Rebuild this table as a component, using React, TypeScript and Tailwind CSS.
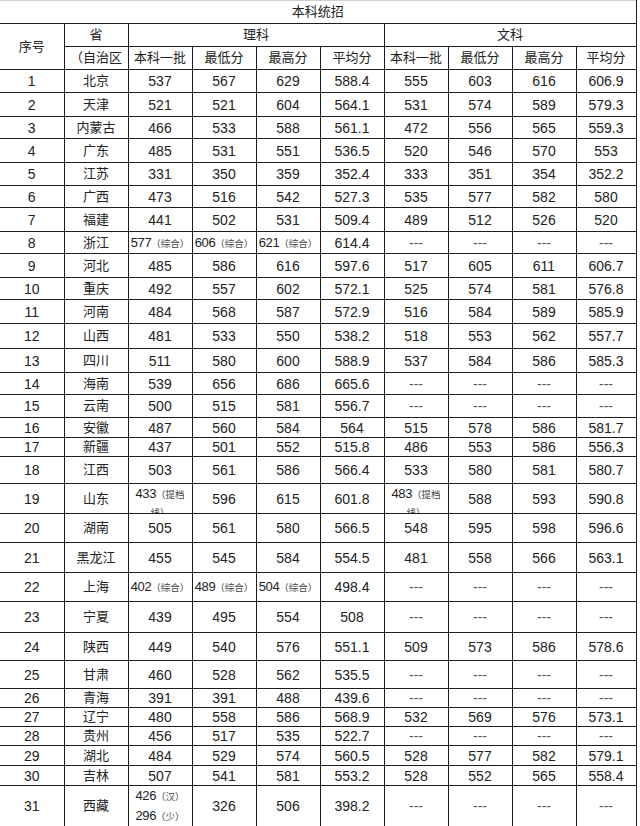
import React from 'react';

type Row = {
    no: string;
    prov: string;
    h: string;
    cells: React.ReactNode[];
};

const Note = ({ children }: { children: React.ReactNode }) => (
    <span className="text-[9.5px] text-[#444]">{children}</span>
);

// number squeezed a bit so the note fits the cell, as in the sheet
const Num = ({ children }: { children: React.ReactNode }) => (
    <span className="text-[13px] tracking-[-0.4px]">{children}</span>
);

const zh = (n: string) => (
    <>
        <Num>{n}</Num>
        <Note>（综合）</Note>
    </>
);

const tidang = (n: string) => (
    <div className="h-[29px] overflow-hidden pt-[1px] leading-[17px]">
        <Num>{n}</Num>
        <Note>（提档</Note>
        <br />
        <Note>线）</Note>
    </div>
);

const D = '---';
const none = [D, D, D, D];

const rows: Row[] = [
    { no: '1', prov: '北京', h: 'h-[23px]', cells: ['537', '567', '629', '588.4', '555', '603', '616', '606.9'] },
    { no: '2', prov: '天津', h: 'h-[24px]', cells: ['521', '521', '604', '564.1', '531', '574', '589', '579.3'] },
    { no: '3', prov: '内蒙古', h: 'h-[22px]', cells: ['466', '533', '588', '561.1', '472', '556', '565', '559.3'] },
    { no: '4', prov: '广东', h: 'h-[24px]', cells: ['485', '531', '551', '536.5', '520', '546', '570', '553'] },
    { no: '5', prov: '江苏', h: 'h-[23px]', cells: ['331', '350', '359', '352.4', '333', '351', '354', '352.2'] },
    { no: '6', prov: '广西', h: 'h-[22px]', cells: ['473', '516', '542', '527.3', '535', '577', '582', '580'] },
    { no: '7', prov: '福建', h: 'h-[24px]', cells: ['441', '502', '531', '509.4', '489', '512', '526', '520'] },
    { no: '8', prov: '浙江', h: 'h-[22px]', cells: [zh('577'), zh('606'), zh('621'), '614.4', ...none] },
    { no: '9', prov: '河北', h: 'h-[24px]', cells: ['485', '586', '616', '597.6', '517', '605', '611', '606.7'] },
    { no: '10', prov: '重庆', h: 'h-[22px]', cells: ['492', '557', '602', '572.1', '525', '574', '581', '576.8'] },
    { no: '11', prov: '河南', h: 'h-[24px]', cells: ['484', '568', '587', '572.9', '516', '584', '589', '585.9'] },
    { no: '12', prov: '山西', h: 'h-[25px]', cells: ['481', '533', '550', '538.2', '518', '553', '562', '557.7'] },
    { no: '13', prov: '四川', h: 'h-[24px]', cells: ['511', '580', '600', '588.9', '537', '584', '586', '585.3'] },
    { no: '14', prov: '海南', h: 'h-[22px]', cells: ['539', '656', '686', '665.6', ...none] },
    { no: '15', prov: '云南', h: 'h-[23px]', cells: ['500', '515', '581', '556.7', ...none] },
    { no: '16', prov: '安徽', h: 'h-[20px]', cells: ['487', '560', '584', '564', '515', '578', '586', '581.7'] },
    { no: '17', prov: '新疆', h: 'h-[19px]', cells: ['437', '501', '552', '515.8', '486', '553', '586', '556.3'] },
    { no: '18', prov: '江西', h: 'h-[27px]', cells: ['503', '561', '586', '566.4', '533', '580', '581', '580.7'] },
    { no: '19', prov: '山东', h: 'h-[30px]', cells: [tidang('433'), '596', '615', '601.8', tidang('483'), '588', '593', '590.8'] },
    { no: '20', prov: '湖南', h: 'h-[29px]', cells: ['505', '561', '580', '566.5', '548', '595', '598', '596.6'] },
    { no: '21', prov: '黑龙江', h: 'h-[30px]', cells: ['455', '545', '584', '554.5', '481', '558', '566', '563.1'] },
    { no: '22', prov: '上海', h: 'h-[29px]', cells: [zh('402'), zh('489'), zh('504'), '498.4', ...none] },
    { no: '23', prov: '宁夏', h: 'h-[31px]', cells: ['439', '495', '554', '508', ...none] },
    { no: '24', prov: '陕西', h: 'h-[28px]', cells: ['449', '540', '576', '551.1', '509', '573', '586', '578.6'] },
    { no: '25', prov: '甘肃', h: 'h-[28px]', cells: ['460', '528', '562', '535.5', ...none] },
    { no: '26', prov: '青海', h: 'h-[19px]', cells: ['391', '391', '488', '439.6', ...none] },
    { no: '27', prov: '辽宁', h: 'h-[19px]', cells: ['480', '558', '586', '568.9', '532', '569', '576', '573.1'] },
    { no: '28', prov: '贵州', h: 'h-[19px]', cells: ['456', '517', '535', '522.7', ...none] },
    { no: '29', prov: '湖北', h: 'h-[20px]', cells: ['484', '529', '574', '560.5', '528', '577', '582', '579.1'] },
    { no: '30', prov: '吉林', h: 'h-[20px]', cells: ['507', '541', '581', '553.2', '528', '552', '565', '558.4'] },
    {
        no: '31',
        prov: '西藏',
        h: 'h-[40px]',
        cells: [
            <div className="leading-[19px]">
                <Num>426</Num>
                <Note>（汉）</Note>
                <br />
                <Num>296</Num>
                <Note>（少）</Note>
            </div>,
            '326',
            '506',
            '398.2',
            ...none,
        ],
    },
];

const td = 'border border-[#1c1c1c] p-0 text-center align-middle whitespace-nowrap leading-[16px]';
const first = 'border-l-0';
const cjk = 'text-[13px]';

const App = () => {
    return (
        <div className="w-[640px] h-[826px] bg-white overflow-hidden font-['Liberation_Sans','Noto_Sans_CJK_SC',sans-serif] text-[14px] text-[#222]">
            <table className="w-[636px] table-fixed border-collapse">
                <colgroup>
                    <col className="w-[64px]" />
                    <col className="w-[64px]" />
                    <col className="w-[64px]" />
                    <col className="w-[64px]" />
                    <col className="w-[64px]" />
                    <col className="w-[64px]" />
                    <col className="w-[64px]" />
                    <col className="w-[64px]" />
                    <col className="w-[64px]" />
                    <col className="w-[60px]" />
                </colgroup>
                <tbody>
                    <tr className="h-[23px]">
                        <td colSpan={10} className={`${td} ${first} border-t-[#cfcfcf] ${cjk}`}>
                            本科统招
                        </td>
                    </tr>
                    <tr className="h-[23px]">
                        <td rowSpan={2} className={`${td} ${first} ${cjk}`}>序号</td>
                        <td className={`${td} ${cjk}`}>省</td>
                        <td colSpan={4} className={`${td} ${cjk}`}>理科</td>
                        <td colSpan={4} className={`${td} ${cjk}`}>文科</td>
                    </tr>
                    <tr className="h-[23px]">
                        <td className={`${td} ${cjk}`}>（自治区</td>
                        <td className={`${td} ${cjk}`}>本科一批</td>
                        <td className={`${td} ${cjk}`}>最低分</td>
                        <td className={`${td} ${cjk}`}>最高分</td>
                        <td className={`${td} ${cjk}`}>平均分</td>
                        <td className={`${td} ${cjk}`}>本科一批</td>
                        <td className={`${td} ${cjk}`}>最低分</td>
                        <td className={`${td} ${cjk}`}>最高分</td>
                        <td className={`${td} ${cjk}`}>平均分</td>
                    </tr>
                    {rows.map((r) => (
                        <tr key={r.no} className={r.h}>
                            <td className={`${td} ${first}`}>{r.no}</td>
                            <td className={`${td} ${cjk}`}>{r.prov}</td>
                            {r.cells.map((c, i) => (
                                <td key={i} className={`${td} ${c === D ? 'text-[#555]' : ''}`}>
                                    {c}
                                </td>
                            ))}
                        </tr>
                    ))}
                </tbody>
            </table>
        </div>
    );
};

export default App;
